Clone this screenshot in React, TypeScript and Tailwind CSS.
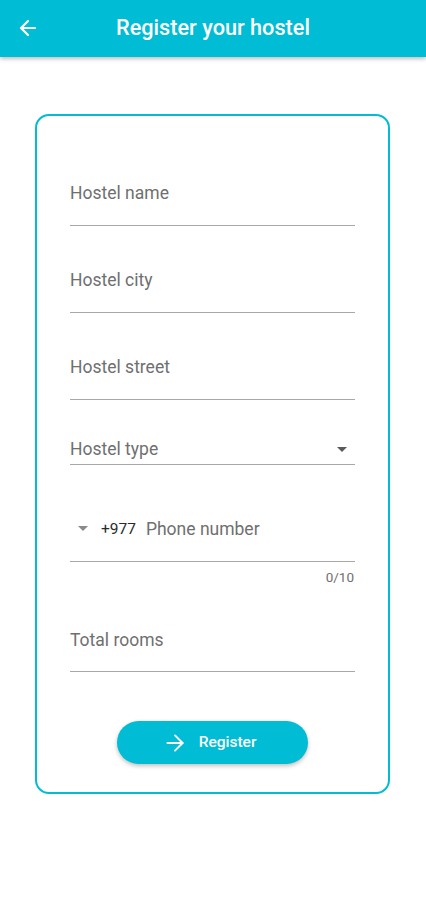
import { ArrowLeft, ArrowRight } from "lucide-react";

function TextField({ label, height, pad }: { label: string; height: string; pad: string }) {
  return (
    <div className={`flex items-end border-b border-[#a8a8a8] ${height} ${pad}`}>
      <span className="text-[17.5px] leading-6 text-[#6f6f6f]">{label}</span>
    </div>
  );
}

function Caret({ className }: { className: string }) {
  return (
    <svg width="10" height="5" viewBox="0 0 10 5" className={className}>
      <path d="M0 0 L10 0 L5 5 Z" fill="currentColor" />
    </svg>
  );
}

export default function App() {
  return (
    <div className="min-h-[912px] bg-white font-['Roboto',sans-serif]">
      <header className="relative h-[57px] bg-[#00bcd4] flex items-center justify-center shadow-[0_2px_4px_rgba(0,0,0,0.25)]">
        <ArrowLeft className="absolute left-[16px] top-[16px] text-white" size={24} strokeWidth={2.2} />
        <h1 className="text-[21.7px] font-medium text-white">Register your hostel</h1>
      </header>

      <div className="px-[35px] pt-[57px]">
        <div className="w-[355px] rounded-[14px] border-[2.5px] border-[#00bcd4] pt-[23px] pb-[28px]">
          <div className="px-[33px]">
            <TextField label="Hostel name" height="h-[87px]" pad="pb-[20px]" />
            <TextField label="Hostel city" height="h-[87px]" pad="pb-[20px]" />
            <TextField label="Hostel street" height="h-[87px]" pad="pb-[20px]" />

            <div className="flex items-end justify-between border-b border-[#a8a8a8] h-[65px] pb-[3px]">
              <span className="text-[17.5px] leading-6 text-[#6f6f6f]">Hostel type</span>
              <Caret className="mb-[9px] mr-[8px] text-[#5a5a5a]" />
            </div>

            <div className="flex items-end border-b border-[#a8a8a8] h-[97px] pb-[20px]">
              <Caret className="ml-[8px] mb-[10px] text-[#8a8a8a]" />
              <span className="ml-[13px] text-[15.5px] leading-6 text-[#2a2a2a]">+977</span>
              <span className="ml-[10px] text-[17.5px] leading-6 text-[#6f6f6f]">Phone number</span>
            </div>
            <div className="h-[30px] flex items-center justify-end pr-px">
              <span className="text-[13.5px] text-[#707070]">0/10</span>
            </div>

            <div className="flex items-end border-b border-[#a8a8a8] h-[80px] pb-[19px]">
              <span className="text-[17.5px] leading-6 text-[#6f6f6f]">Total rooms</span>
            </div>
          </div>

          <div className="flex justify-center mt-[49px]">
            <button className="flex items-center justify-center gap-[11px] w-[191px] h-[43px] pr-[7px] rounded-full bg-[#00bcd4] text-white shadow-[0_2px_4px_rgba(0,0,0,0.25)]">
              <ArrowRight size={26} strokeWidth={1.8} />
              <span className="text-[15.5px] font-medium">Register</span>
            </button>
          </div>
        </div>
      </div>
    </div>
  );
}
